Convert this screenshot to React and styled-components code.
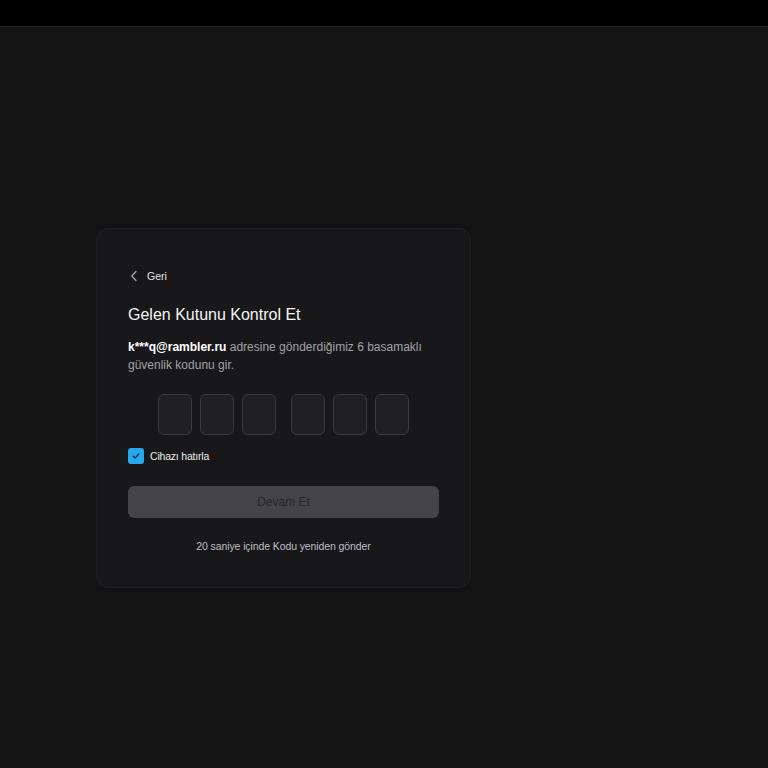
import React from "react";
import styled, { createGlobalStyle } from "styled-components";

const Global = createGlobalStyle`
  html, body { margin: 0; padding: 0; background: #131313; }
  body { font-family: "Liberation Sans", Arial, sans-serif; -webkit-font-smoothing: antialiased; }
  * { box-sizing: border-box; }
`;

const Page = styled.div`
  min-height: 768px;
  background: #131313;
  display: flex;
  flex-direction: column;
`;

const TopBar = styled.div`
  height: 27px;
  background: #000;
  border-bottom: 1px solid #1f1f1f;
`;

const Main = styled.main`
  padding: 201px 0 0 96px;
`;

const Card = styled.section`
  width: 375px;
  background: #18181b;
  border: 1px solid #1f1f23;
  border-radius: 12px;
  padding: 39px 31px 33px;
  display: flex;
  flex-direction: column;
`;

const Back = styled.button`
  all: unset;
  display: flex;
  align-items: center;
  gap: 9px;
  height: 16px;
  padding-left: 2px;
  color: #e6e6e6;
  font-family: "Liberation Sans", Arial, sans-serif;
  font-size: 10.5px;
  font-weight: 400;
  cursor: pointer;
  svg { color: #a8a8ad; }
`;

const Title = styled.h1`
  margin: 20px 0 0;
  font-family: "Liberation Sans", Arial, sans-serif;
  font-weight: 400;
  font-size: 16px;
  line-height: 22px;
  color: #f4f4f5;
`;

const Desc = styled.p`
  margin: 12px 0 0;
  font-size: 12px;
  line-height: 18px;
  color: #a1a1a6;
  b {
    font-weight: 700;
    color: #ffffff;
  }
`;

const Otp = styled.div`
  margin-top: 20px;
  display: flex;
  justify-content: center;
  gap: 15px;
`;

const Group = styled.div`
  display: flex;
  gap: 8px;
`;

const Digit = styled.div`
  width: 34px;
  height: 41px;
  border-radius: 6px;
  background: #202024;
  border: 1px solid #3a3a3f;
`;

const Remember = styled.label`
  margin-top: 13px;
  display: flex;
  align-items: center;
  gap: 6px;
  font-size: 10.5px;
  letter-spacing: -0.2px;
  font-weight: 400;
  color: #ececee;
`;

const Check = styled.span`
  width: 16px;
  height: 16px;
  border-radius: 3px;
  background: #27a9f1;
  display: flex;
  align-items: center;
  justify-content: center;
`;

const Continue = styled.button`
  margin-top: 22px;
  height: 32px;
  border: none;
  border-radius: 6px;
  background: #434348;
  color: #28282c;
  font-family: "Liberation Sans", Arial, sans-serif;
  font-size: 12px;
  font-weight: 400;
`;

const Resend = styled.p`
  margin: 20px 0 0;
  text-align: center;
  font-size: 10.5px;
  letter-spacing: -0.1px;
  line-height: 16px;
  color: #bdbdc2;
`;

export default function App() {
  return (
    <>
      <Global />
      <Page>
        <TopBar />
        <Main>
          <Card>
            <Back>
              <svg width="8" height="12" viewBox="0 0 8 12" fill="none">
                <path d="M6 1.5L1.8 6L6 10.5" stroke="currentColor" strokeWidth="1.2" strokeLinecap="round" strokeLinejoin="round" />
              </svg>
              Geri
            </Back>
            <Title>Gelen Kutunu Kontrol Et</Title>
            <Desc>
              <b>k***q@rambler.ru</b> adresine gönderdiğimiz 6 basamaklı güvenlik kodunu gir.
            </Desc>
            <Otp>
              <Group>
                <Digit />
                <Digit />
                <Digit />
              </Group>
              <Group>
                <Digit />
                <Digit />
                <Digit />
              </Group>
            </Otp>
            <Remember>
              <Check>
                <svg width="10" height="10" viewBox="0 0 10 10" fill="none">
                  <path d="M2.2 5.2L4.1 7.1L7.8 2.9" stroke="#0d2a40" strokeWidth="1.4" strokeLinecap="round" strokeLinejoin="round" />
                </svg>
              </Check>
              Cihazı hatırla
            </Remember>
            <Continue>Devam Et</Continue>
            <Resend>20 saniye içinde Kodu yeniden gönder</Resend>
          </Card>
        </Main>
      </Page>
    </>
  );
}
